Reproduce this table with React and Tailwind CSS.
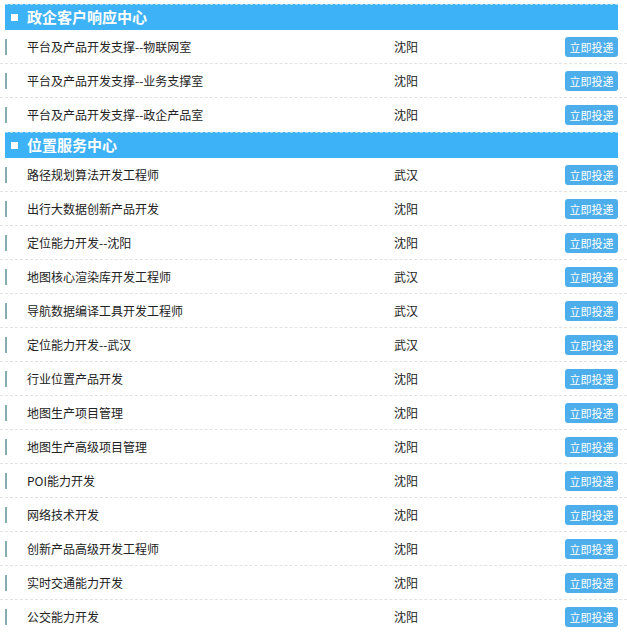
import React from "react";

const sections = [
  {
    title: "政企客户响应中心",
    jobs: [
      ["平台及产品开发支撑--物联网室", "沈阳"],
      ["平台及产品开发支撑--业务支撑室", "沈阳"],
      ["平台及产品开发支撑--政企产品室", "沈阳"],
    ],
  },
  {
    title: "位置服务中心",
    jobs: [
      ["路径规划算法开发工程师", "武汉"],
      ["出行大数据创新产品开发", "沈阳"],
      ["定位能力开发--沈阳", "沈阳"],
      ["地图核心渲染库开发工程师", "武汉"],
      ["导航数据编译工具开发工程师", "武汉"],
      ["定位能力开发--武汉", "武汉"],
      ["行业位置产品开发", "沈阳"],
      ["地图生产项目管理", "沈阳"],
      ["地图生产高级项目管理", "沈阳"],
      ["POI能力开发", "沈阳"],
      ["网络技术开发", "沈阳"],
      ["创新产品高级开发工程师", "沈阳"],
      ["实时交通能力开发", "沈阳"],
      ["公交能力开发", "沈阳"],
    ],
  },
];

const JobRow = ({ name, city, last }) => (
  <div
    className={`flex items-center h-[34px] ${
      last ? "" : "border-b border-dashed border-[#e2e2e2]"
    }`}
  >
    <div className="w-[2px] h-[16px] bg-[#86aeb0] ml-[5px]" />
    <div className="w-[367px] pl-[20px] text-[12px] text-[#222]">{name}</div>
    <div className="flex-1 pl-[20px] text-[12px] text-[#222]">{city}</div>
    <button className="w-[53px] h-[20px] mr-[9px] rounded-[3px] bg-[#4caeea] text-white text-[11px] leading-[20px]">
      立即投递
    </button>
  </div>
);

export default function App() {
  return (
    <div
      className="w-[627px] h-[633px] bg-white overflow-hidden"
      style={{ fontFamily: '"Microsoft YaHei", "Noto Sans CJK SC", sans-serif' }}
    >
      {sections.map((s, si) => (
        <div key={s.title}>
          <div className={`${si === 0 ? "pt-[4px]" : ""} pl-[5px] pr-[9px]`}>
            <div className="h-[26px] bg-[#3eb2f7] border-t border-dashed border-[#9fd6f7] flex items-center">
              <div className="w-[7px] h-[7px] bg-white ml-[6px]" />
              <div className="ml-[9px] text-white font-bold text-[15px]">{s.title}</div>
            </div>
          </div>
          {s.jobs.map((j, i) => (
            <JobRow key={j[0]} name={j[0]} city={j[1]} last={i === s.jobs.length - 1} />
          ))}
        </div>
      ))}
    </div>
  );
}
